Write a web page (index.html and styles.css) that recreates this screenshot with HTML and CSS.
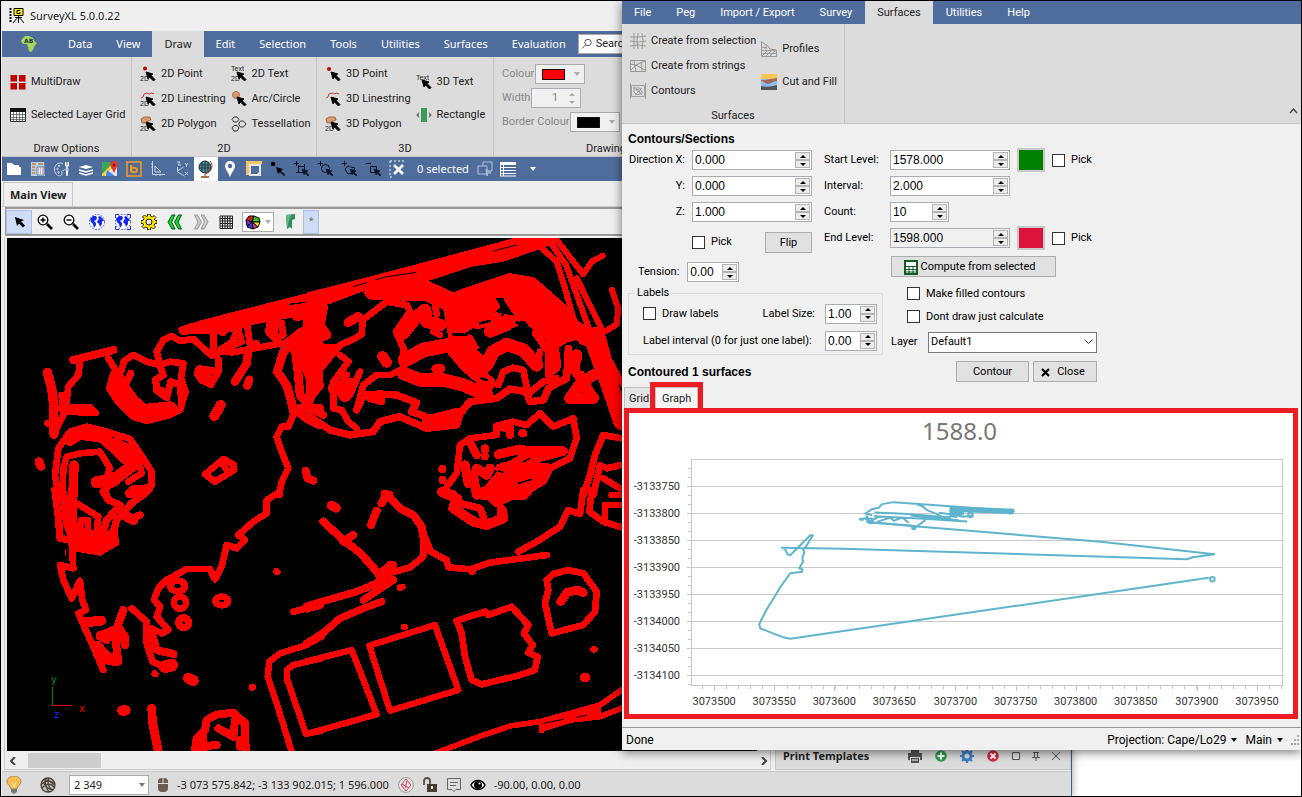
FILE: index.html
```html
<!DOCTYPE html>
<html lang="en">
<head>
<meta charset="utf-8">
<title>SurveyXL 5.0.0.22</title>
<link rel="stylesheet" href="styles.css">
</head>
<body>
<svg class="defs" aria-hidden="true">
  <symbol id="arrow" viewBox="0 0 16 16"><path d="M6 6l7 2-2 1.500 4 4-1.500 1.500-4-4L8 13z" fill="#000" stroke="#000"/></symbol>
  <symbol id="cur" viewBox="0 0 16 16"><path d="M8 8l6 2-2 1 3 3-1 1-3-3-1 2z" fill="#0b1420" stroke="#0b1420" stroke-width=".6"/></symbol>
  <symbol id="squig" viewBox="0 0 16 16"><path d="M1 7l2-1 1-3 3-1 2 1 3-1 2 1" fill="none" stroke="#c23b3b"/></symbol>
  <symbol id="poly" viewBox="0 0 16 16"><path d="M1 3l3-2h6l1 3-3 1-2 2H2z" fill="#d99a6c" stroke="#8a5a3a" stroke-width=".8"/></symbol>
  <symbol id="globe" viewBox="0 0 16 16"><circle cx="8" cy="8" r="7.500" fill="#fff" stroke="#2438e8" stroke-dasharray="1.500 1.500"/><path d="M1 5l3-3 3 0 1 2-1 2-2 1 2 2 0 2-2 3-1-4-2-2zM9 3l2-1 3 3 1 2-2 0 0 3-2 3-1-3-2-2 1-2 1-1z" fill="#1428f0"/></symbol>
</svg>

<main class="desktop">
<section class="app" aria-label="SurveyXL">
  <header class="titlebar">
    <svg width="16" height="16" viewBox="0 0 16 16"><path d="M1.500 0v14" stroke="#000" stroke-width="2" stroke-dasharray="2 1"/><path d="M5 .5h9v7H5z" fill="#ffe920" stroke="#000"/><path d="M11 2.500H8v3h3V4" fill="none" stroke="#000"/><path d="M9.500 8v7M9 9l-5 6M10 9l5 6M6 9.500h7" stroke="#000"/></svg>
    <span>SurveyXL 5.0.0.22</span>
  </header>
  <nav class="tabs">
    <button class="logo" aria-label="Menu"><svg width="18" height="18" viewBox="0 0 18 18"><path d="M2 4l3-3 4 0 4 2 2 4 2 1-3 4-1 3-2 2-2-1-1-4-1-3-4 0-2-3z" fill="#a8d65c"/><text x="4" y="8" class="ab">AB</text></svg></button>
    <button>Data</button><button>View</button><button class="on">Draw</button><button>Edit</button><button>Selection</button><button>Tools</button><button>Utilities</button><button>Surfaces</button><button>Evaluation</button>
    <label class="search"><svg width="12" height="12" viewBox="0 0 12 12"><circle cx="7" cy="4.500" r="3.200" fill="none" stroke="#555"/><path d="M4.500 7L1 10.500" stroke="#555"/></svg><input type="text" value="Search" aria-label="Search"></label>
  </nav>
  <div class="ribbon">
    <section class="group g-options">
      <div class="cols"><div class="col two">
        <button><svg width="16" height="16" viewBox="0 0 16 16"><path d="M.5 1h6.500v6.500H.5zM9 1h6.500v6.500H9zM.5 9h6.500v6.500H.5zM9 9h6.500v6.500H9z" fill="#c40000"/></svg>MultiDraw</button>
        <button><svg width="16" height="16" viewBox="0 0 16 16"><path d="M.5 1.500h15v13H.5z" fill="#fff" stroke="#222"/><path d="M0 1h16v4H0z" fill="#111"/><path d="M3.500 5v10M6.500 5v10M9.500 5v10M12.500 5v10M0 7.500h16M0 10.500h16M0 12.500h16" stroke="#444" stroke-width=".7"/></svg>Selected Layer Grid</button>
      </div></div>
      <h2>Draw Options</h2>
    </section>
    <section class="group g-2d">
      <div class="cols">
        <div class="col">
          <button><svg width="16" height="16" viewBox="0 0 16 16"><circle cx="5" cy="2.500" r="2" fill="#c40000"/><use href="#arrow"/><text x="0" y="15" class="tiny">2D</text></svg>2D Point</button>
          <button><svg width="16" height="16" viewBox="0 0 16 16"><use href="#squig"/><use href="#arrow"/><text x="0" y="15" class="tiny">2D</text></svg>2D Linestring</button>
          <button><svg width="16" height="16" viewBox="0 0 16 16"><use href="#poly"/><use href="#arrow"/><text x="0" y="15" class="tiny">2D</text></svg>2D Polygon</button>
        </div>
        <div class="col">
          <button><svg width="16" height="16" viewBox="0 0 16 16"><text x="0" y="5" class="tiny">Text</text><use href="#arrow"/><text x="0" y="15" class="tiny">2D</text></svg>2D Text</button>
          <button><svg width="16" height="16" viewBox="0 0 16 16"><circle cx="5" cy="4" r="3.500" fill="#d99a6c" stroke="#a8744e"/><use href="#arrow"/></svg>Arc/Circle</button>
          <button><svg width="16" height="16" viewBox="0 0 16 16" fill="none" stroke="#333"><path d="M3 1h3l2 2.500L6 6H3L1 3.500zM3 9.500h3l2 2.500-2 3H3l-2-3zM9.500 5h3l2.500 3-2.500 3h-3L7.500 8z"/></svg>Tessellation</button>
        </div>
      </div>
      <h2>2D</h2>
    </section>
    <section class="group g-3d">
      <div class="cols">
        <div class="col">
          <button><svg width="16" height="16" viewBox="0 0 16 16"><circle cx="4" cy="3" r="2" fill="#c40000"/><use href="#arrow"/></svg>3D Point</button>
          <button><svg width="16" height="16" viewBox="0 0 16 16"><use href="#squig"/><use href="#arrow"/></svg>3D Linestring</button>
          <button><svg width="16" height="16" viewBox="0 0 16 16"><use href="#poly"/><use href="#arrow"/><text x="0" y="15" class="tiny">2D</text></svg>3D Polygon</button>
        </div>
        <div class="col two">
          <button><svg width="16" height="16" viewBox="0 0 16 16"><text x="0" y="6" class="tiny">Text</text><use href="#arrow"/></svg>3D Text</button>
          <button><svg width="16" height="16" viewBox="0 0 16 16"><path d="M5 1h6v14H5z" fill="#3a9c55"/><path d="M3 5v6L0 8zM13 5v6l3-3z" fill="#777"/></svg>Rectangle</button>
        </div>
      </div>
      <h2>3D</h2>
    </section>
    <section class="group g-drawing">
      <div class="cols"><div class="col dim">
        <div class="field">Colour<button class="swatchbox" aria-label="Colour"><i class="chip red"></i><i class="caret"></i></button></div>
        <div class="field"><label for="w">Width</label><span class="num flat"><input id="w" type="text" value="1"><span class="spin"><button class="up" aria-label="Increase"></button><button class="down" aria-label="Decrease"></button></span></span></div>
        <div class="field">Border Colour<button class="swatchbox" aria-label="Border colour"><i class="chip black"></i><i class="caret"></i></button></div>
      </div></div>
      <h2>Drawing</h2>
    </section>
  </div>
  <div class="quickbar">
    <button aria-label="Open"><svg width="16" height="16" viewBox="0 0 16 16"><path d="M1 2h5l2 2h5v2h2v8H1z" fill="#fff"/></svg></button>
    <button aria-label="Report"><svg width="16" height="16" viewBox="0 0 16 16"><path d="M1 1h13l1 14H1z" fill="#b9d3ee"/><path d="M2 3h4M8 3h5M2 6h3M2 9h3M2 12h3" stroke="#c77f3c" stroke-width="1.500"/><path d="M7 6h7v8H7z" fill="#fff" stroke="#56749c"/><path d="M8 8h5M8 10h5M8 12h5" stroke="#b05050" stroke-dasharray="1 1"/></svg></button>
    <button aria-label="Palette"><svg width="16" height="16" viewBox="0 0 16 16" fill="none" stroke="#c9d5e6"><path d="M9 3C5 0 0 4 .500 9c.5 5 5 7 7 5 1.500-1.500-.5-3 .5-4s2 0 2.500-1.500"/><circle cx="5" cy="5" r=".8"/><circle cx="3.500" cy="8" r=".8"/><circle cx="4.500" cy="11.500" r=".8"/><path d="M13 1v5l-1 2 1 7 1-7-1-2M11.500 1v4h3V1" stroke="#fff"/></svg></button>
    <button aria-label="Layers"><svg width="16" height="16" viewBox="0 0 16 16" fill="none" stroke="#fff" stroke-width="1.400"><path d="M1 12l7 2 7-2M1 9l7 2 7-2"/><path d="M1 6l7-2 7 2-7 2z" fill="#fff" stroke="none"/></svg></button>
    <button aria-label="Map"><svg width="16" height="16" viewBox="0 0 16 16"><path d="M0 1h15v14H0z" fill="#3aa757"/><path d="M0 15L15 3v12z" fill="#e8e8e8"/><path d="M0 13L12 1h3L3 15H0z" fill="#f8cf3c"/><path d="M5 9l8 6H4z" fill="#4285f4"/><path d="M12 12L8 4a4 4 0 1 1 8 0z" fill="#e33b2e"/><circle cx="12" cy="4" r="1.500" fill="#7d1712"/></svg></button>
    <button aria-label="Imagery"><svg width="16" height="16" viewBox="0 0 16 16" fill="none" stroke="#f39a1e" stroke-width="1.500"><path d="M1 1h14v14H1z"/><path d="M5 4v7" stroke-width="2"/><ellipse cx="8" cy="9" rx="3" ry="2.200" stroke-width="2"/></svg></button>
    <button aria-label="Angle"><svg width="16" height="16" viewBox="0 0 16 16" fill="none" stroke="#c7d3e5"><path d="M2.500 0v13.500H15M5 5l6 6H5z"/><path d="M1 3h2M1 6h2M6 13v2M10 13v2"/></svg></button>
    <button aria-label="Axes"><svg width="16" height="16" viewBox="0 0 16 16" fill="none" stroke="#c2cfe2"><path d="M3 1h3L4 4h3M3.500 6v5l7 4M3.500 10l6-4M11 2l1.500 2L14 2M12.500 4v2M11 11l3 3M14 11l-3 3"/></svg></button>
    <button class="on" aria-label="Globe"><svg width="18" height="18" viewBox="0 0 18 18"><circle cx="8" cy="7" r="6" fill="#4c8f98" stroke="#253038"/><path d="M3 5h10M2 8h12M8 1v12M5 2v10M11 2v10" stroke="#19262c" stroke-width=".8"/><path d="M13 1c4 4 2 11-5 13v2" fill="none" stroke="#a43f2b"/><path d="M4 16h8v2H4z" fill="#a9744a"/></svg></button>
    <button aria-label="Pin"><svg width="16" height="16" viewBox="0 0 16 16"><path d="M8 16C6 11 3 8 3 5a5 5 0 0 1 10 0c0 3-3 6-5 11z" fill="#fff"/><circle cx="8" cy="5" r="2.200" fill="#4f6d9c"/></svg></button>
    <button aria-label="Sheet"><svg width="16" height="16" viewBox="0 0 16 16"><path d="M3 3h12v12H3z" fill="#e6e6e6"/><path d="M0 0h16v3H0zM0 0h3v14H0z" fill="#f3c56b"/><path d="M5 5h8v6l-2 2H5z" fill="#4f6d9c"/></svg></button>
    <button aria-label="Pick point"><svg width="16" height="16" viewBox="0 0 16 16"><circle cx="3" cy="3" r="2.300"/><path d="M6 6l7 2-2 2 4 4-1 1-4-4-2 2z"/></svg></button>
    <button aria-label="Add rectangle"><svg width="16" height="16" viewBox="0 0 16 16" fill="none" stroke="#0b1420"><path d="M0 2.500h5M2.500 0v5M4 5.500h6.500v6H4.500V4M10.500 5V3M4 11.500h-2"/><use href="#cur"/></svg></button>
    <button aria-label="Add circle"><svg width="16" height="16" viewBox="0 0 16 16" fill="none" stroke="#0b1420"><path d="M0 2.500h5M2.500 0v5"/><circle cx="7.500" cy="7.500" r="4"/><use href="#cur"/></svg></button>
    <button aria-label="Add polygon"><svg width="16" height="16" viewBox="0 0 16 16" fill="none" stroke="#0b1420"><path d="M0 2.500h5M2.500 0v5M3 8l3-3 3 1 4 1-3 5-4 1z"/><use href="#cur"/></svg></button>
    <button aria-label="Remove"><svg width="16" height="16" viewBox="0 0 16 16" fill="none" stroke="#0b1420"><path d="M0 2.500h5M4.500 5.500h6v6h-6z"/><use href="#cur"/></svg></button>
    <button aria-label="Clear"><svg width="18" height="18" viewBox="0 0 18 18"><path d="M1 1h16M1 1v16M1 17h2" stroke="#fff" stroke-dasharray="2 2" fill="none"/><path d="M5 5l9 9M14 5l-9 9" stroke="#fff" stroke-width="2.600"/></svg></button>
    <span class="count">0 selected</span>
    <button aria-label="Copy"><svg width="16" height="16" viewBox="0 0 16 16" fill="none" stroke="#b4c3da"><path d="M6 1h9v9h-5M6 5V1M1 5h9v8H1z"/><path d="M9 8l5 4-3 0-1 3z"/></svg></button>
    <button aria-label="List"><svg width="17" height="16" viewBox="0 0 17 16"><path d="M0 1h16v3H0z" fill="#fff"/><path d="M.5 4v11M3.500 4v11M0 6.500h16M0 9.500h16M0 12.500h16M0 15h16" stroke="#fff"/></svg></button>
    <button aria-label="More"><i class="caret white"></i></button>
  </div>
  <div class="doctabs"><button>Main View</button></div>
  <div class="viewbar">
    <button class="on" aria-label="Select"><svg width="16" height="16" viewBox="0 0 16 16"><path d="M4 3l9 3-3 1.500 4 4-2 2-4-4L6 12z"/></svg></button>
    <button aria-label="Zoom in"><svg width="16" height="16" viewBox="0 0 16 16" fill="none" stroke="#000"><circle cx="6" cy="6" r="4.800" fill="#fff" stroke-width="1.300"/><path d="M10 10l5 5" stroke-width="2.600"/><path d="M3.500 6h5M6 3.500v5" stroke-width="1.400"/></svg></button>
    <button aria-label="Zoom out"><svg width="16" height="16" viewBox="0 0 16 16" fill="none" stroke="#000"><circle cx="6" cy="6" r="4.800" fill="#fff" stroke-width="1.300"/><path d="M10 10l5 5" stroke-width="2.600"/><path d="M3.500 6h5" stroke-width="1.400"/></svg></button>
    <button aria-label="World"><svg width="16" height="16"><use href="#globe"/></svg></button>
    <button aria-label="World extents"><svg width="16" height="16" viewBox="0 0 16 16"><use href="#globe"/><path d="M.5 4V.5H4M12 .5h3.500V4M15.500 12v3.500H12M4 15.500H.5V12" fill="none" stroke="#2438e8"/></svg></button>
    <button aria-label="Settings"><svg width="16" height="16" viewBox="0 0 16 16"><path d="M6.500 0h3v2l2 1 1.500-1.500 2 2L13.500 5l.5 1.500h2v3h-2l-1 2 1.500 1.500-2 2L11 13.500l-1.500.5v2h-3v-2l-2-1L3 14.500l-2-2L2.500 11 2 9.500H0v-3h2l1-2L1.500 3l2-2L5 2.500 6.500 2z" fill="#ffe600" stroke="#222"/><circle cx="8" cy="8" r="3" fill="#eee" stroke="#222"/></svg></button>
    <button aria-label="Back"><svg width="16" height="16" viewBox="0 0 16 16" fill="#0fe02c" stroke="#064d10"><path d="M5 1h3L4.500 8 8 15H5L1 8zM11.500 1h3L11 8l3.500 7h-3l-4-7z"/></svg></button>
    <button aria-label="Forward"><svg width="16" height="16" viewBox="0 0 16 16" fill="#ccc" stroke="#999"><path d="M1.500 1h3l4 7-4 7h-3L5 8zM8 1h3l4 7-4 7H8l3.500-7z"/></svg></button>
    <button aria-label="Grid"><svg width="16" height="16" viewBox="0 0 16 16"><path d="M2 2h12.500v12.500H2zM4.500 2v12M7 2v12M9.500 2v12M12 2v12M2 4.500h12M2 7h12M2 9.500h12M2 12h12" fill="none" stroke="#222"/></svg></button>
    <button class="combo" aria-label="View colours"><svg width="16" height="16" viewBox="0 0 16 16" stroke="#000"><path d="M7 8L1 6l3-4 5 0z" fill="#d81f1f"/><path d="M7 8L9 2l5 2 1 4z" fill="#2fc42f"/><path d="M7 8l8 0-2 5z" fill="#ffe600"/><path d="M7 8l6 5-5 2z" fill="#e7369e"/><path d="M7 8l1 7-6-2z" fill="#2b48e0"/><path d="M7 8l-6-2 1 6z" fill="#8a2be2"/></svg><i class="caret"></i></button>
    <button aria-label="Run"><svg width="16" height="16" viewBox="0 0 16 16"><path d="M4 1l9-1v5l-3 1 0 9-2-2-3 2z" fill="#2f8f5b"/><path d="M4 1l5 0-4 13z" fill="#61b486"/></svg></button>
    <button class="star">*</button>
  </div>
  <div class="work">
    <div class="viewport">
      <svg class="map" viewBox="7 238 750 513" preserveAspectRatio="xMinYMin slice" role="img" aria-label="Survey drawing">
        <rect x="7" y="238" width="2000" height="2000" fill="#000"/>
        <g fill="none" stroke="#f00" stroke-linecap="round" stroke-linejoin="round" shape-rendering="crispEdges">
          <g transform="translate(0 235) scale(.33333)" stroke-width="20">
            <path d="M542 282L600 264 700 238 960 172V240L890 238 760 262 690 285 620 290 545 292Z" fill="#f00" stroke-width="14"/>
            <path d="M870 208L960 196" stroke="#000" stroke-width="4"/>
            <path d="M890 245L940 238M640 275L670 290" stroke-width="26"/>
            <path d="M480 390L470 350 490 315 515 303 540 318 580 312 605 335 635 362 660 350 700 352 735 345 860 322 900 290 960 262M640 290L640 340M690 345L700 310 715 285 725 320 700 330M660 345L690 325M740 260L750 330 770 325M812 240L805 290 825 310 850 300 845 265 825 265 825 290"/>
            <path d="M745 345L740 385 705 440M742 452L748 434" stroke-width="25"/>
            <path d="M655 375L655 410 632 448 605 435 592 415 610 403 640 408" stroke-width="22"/><path d="M600 405L620 425" stroke-width="30"/>
            <path d="M220 375L340 345" stroke-width="24"/>
            <path d="M240 385L235 420 205 455 200 500M325 370L350 410M160 600L190 540 185 480M142 565L160 570"/>
            <path d="M142 412L155 460 160 500 162 598" stroke-width="28"/>
            <path d="M180 520L268 516 288 534 200 530Z" fill="#f00"/>
            <path d="M365 405L372 378 400 360 440 380 480 390 510 380 550 385 543 430 557 470 540 525 510 540 440 558 400 545 350 495 328 460 340 415Z"/>
            <path d="M350 430L370 480 430 530 510 522" stroke-width="46"/>
            <path d="M392 415L375 450 400 485M480 390L490 420 465 435 475 470 500 488 512 440 540 450 545 500M470 465L505 470" stroke-width="21"/>
            <path d="M662 510L643 543" stroke-width="30"/>
            <path d="M615 718L645 740 703 705 700 688 670 672ZM670 690L685 712"/>
            <path d="M117 680L123 694" stroke-width="26"/>
            <path d="M175 780L165 720 175 640 210 590 260 575 320 590 390 612 430 670 455 710 455 750 430 775"/>
            <path d="M210 615L240 596 310 606 360 655 400 690 350 728 290 742" stroke-width="36"/>
            <path d="M188 780L190 700 200 665 240 655 300 650 330 700 320 730M320 780L315 760 350 740M385 740L425 715 410 650"/>
            <path d="M345 620L385 640 420 680" stroke-width="26"/>
            <path d="M222 690L220 780M400 765L445 762" stroke-width="28"/>
            <path d="M870 500L880 540 865 575 845 575 830 605 845 650 865 700 845 740 838 780"/>
            <path d="M917 707L922 730 940 737" stroke-width="24"/>
            <path d="M950 290L890 315 850 350 832 410 860 450 880 520 920 550 960 570M885 340L895 420 900 480 925 505 935 480 960 450M900 520L960 520" stroke-width="26"/>
            <path d="M900 320L960 250V440L935 450 915 400Z" fill="#f00"/>
          </g>
          <g transform="translate(310 235) scale(.33333)" stroke-width="20">
            <path d="M-6 178L160 136 350 86 610 16H740L690 36 580 74 480 90 360 130 180 155 60 200-6 212Z" fill="#f00" stroke-width="12"/>
            <path d="M130 155L230 125 320 112M550 48L620 30" stroke="#000" stroke-width="3"/>
            <path d="M190 165L350 168 430 205 480 185 600 145 660 155 740 225 780 290" stroke-width="60"/>
            <path d="M430 200L640 150 790 300 740 330 700 300 640 240 610 180 540 180 560 215 520 245 440 300Z" fill="#f00"/>
            <path d="M740 15L820 118 845 80 878 62M690 35L740 80 765 160 790 250 815 320M720 20L768 90 790 150 840 290M800 130L880 292 920 268 925 220 906 165M850 290L940 450" stroke-width="18"/>
            <path d="M780 270L850 320 890 430 935 560M860 300L915 500" stroke-width="50"/>
            <path d="M-6 220L40 215 30 270 50 300-6 320Z" fill="#f00" stroke-width="28"/>
            <path d="M-6 330L90 335 20 420-6 490Z" fill="#f00" stroke-width="14"/>
            <path d="M115 262L145 245" stroke-width="28"/>
            <path d="M90 330L125 315 155 298 158 255 230 200 290 210 300 230 258 290 280 340 280 400 240 420 200 420 160 450 140 525M90 360L115 380 70 440 70 520 95 525 115 560 140 580M150 410L120 480 90 450 110 420" stroke-width="20"/>
            <path d="M75 460L120 450 105 480" stroke-width="42"/>
            <path d="M218 365L230 382" stroke-width="32"/>
            <path d="M280 295L320 245 345 225 350 260 390 270" stroke-width="38"/>
            <path d="M375 210L380 238M370 290L390 300"/>
            <path d="M285 375L340 345 420 330 470 390 535 445" stroke-width="44"/>
            <path d="M280 415L330 435 400 435 460 450 530 480" stroke-width="40"/>
            <path d="M310 400L420 365 445 410Z" fill="#000" stroke="none"/>
            <path d="M378 402L392 400" stroke-width="28"/>
            <path d="M420 200L440 310 500 370M470 320L515 400" stroke-width="48"/>
            <path d="M500 265L560 250 610 260M540 290L590 270" stroke-width="36"/>
            <path d="M500 345L530 322 640 300 650 316 560 330 525 365Z" fill="#000" stroke="none"/>
            <path d="M510 265L540 258M578 240L590 215M620 262L650 282M430 298L470 300M515 430L530 435" stroke="#000" stroke-width="8"/>
            <path d="M600 190L635 240M660 210L720 290 735 390" stroke-width="38"/>
            <path d="M530 390L550 350 590 328 640 345 680 390" stroke-width="40"/>
            <path d="M565 450L580 410 610 398 640 405 655 480M665 268H672M675 295L715 350 715 420 740 400M690 350L680 400M650 480L700 440 740 430"/>
            <path d="M0 520L40 540M0 545L60 585 120 600 190 590 210 560 270 545 350 580 440 570 450 535 480 500 560 490 600 462 650 470 660 500 700 495 715 460 770 430 775 340" stroke-width="22"/>
            <path d="M140 525L160 480 210 478 260 480 320 503 305 530 360 550 440 530M210 475L215 500 180 490" stroke-width="22"/>
            <path d="M350 560L440 550" stroke-width="30"/>
            <path d="M780 490L815 440 850 490 790 490M800 360L795 400 820 440 850 420" stroke-width="34"/>
            <path d="M820 380L818 400" stroke="#000" stroke-width="16"/>
            <path d="M400 770L440 715 450 630 480 610 560 600 560 572 610 560 650 570 690 535 730 575 790 550 800 610 780 670 720 700 700 740 640 775"/>
            <path d="M480 620L500 660M560 575L600 580M637 595H640M600 600V590M525 640V645M525 662V664M397 702V703M398 735V736" stroke-width="24"/>
            <path d="M565 658L620 645 760 648 640 680 570 700M465 690L475 745M500 700L530 720 540 700" stroke-width="28"/>
            <path d="M520 780L590 700 640 670 680 665 660 695 715 700 640 780Z" fill="#f00" stroke-width="30"/>
            <path d="M625 745L665 733M565 708L580 712M640 680L660 670" stroke="#000" stroke-width="5"/>
            <path d="M395 770L430 780M490 720L500 780" stroke-width="28"/>
            <path d="M935 610L880 600 855 660 840 720 820 780M870 690L850 780M935 690L890 700 870 690M880 730L930 760M0 735L10 737M222 775L240 778" stroke-width="20"/>
          </g>
          <g transform="translate(0 490) scale(.33333)" stroke-width="20">
            <path d="M165 0L175 80 180 145 210 150M188 0L200 100 220 160M310 5L325 30 360 45 320 90 300 160M440 5L395 40 350 90 330 160M395 85L420 75" stroke-width="22"/>
            <path d="M218 0L215 100 250 130" stroke-width="30"/>
            <path d="M230 40L295 80 290 130M240 130L243 90 263 90 265 130"/>
            <path d="M215 125L330 130 345 110 350 160 300 190 230 178Z" fill="#f00" stroke-width="14"/>
            <path d="M390 10L430 10M380 80L400 90" stroke-width="30"/>
            <path d="M215 160L220 235 180 225 190 270 215 325 240 272 247 330 258 360 235 370 280 470 310 540"/>
            <path d="M196 180V196" stroke-width="4"/>
            <path d="M255 397L303 392" stroke-width="30"/>
            <path d="M370 360L352 410 375 440 375 465M300 435L355 420M345 440L355 515M300 440L320 450" stroke-width="24"/>
            <path d="M320 435L355 420 365 440M290 470L320 505 345 510" stroke-width="36"/>
            <path d="M395 355L440 395 440 460 458 515 500 535M455 415L485 430 505 420 470 380 480 350 462 330 475 295 500 270 560 237 630 237 645 268 665 230 680 165 710 175 735 150 715 135 760 95 800 70 800 30 840 5"/>
            <path d="M455 430L470 480 520 492" stroke-width="24"/><path d="M495 530L515 525" stroke-width="38"/>
            <ellipse cx="533" cy="288" rx="22" ry="16"/><circle cx="540" cy="338" r="18"/><circle cx="551" cy="398" r="15" stroke-width="22"/><ellipse cx="665" cy="333" rx="19" ry="13"/>
            <path d="M829 244L832 246M464 551L466 552M756 592L758 592M880 365L960 345"/>
            <path d="M368 662L376 661M565 564L580 572" stroke-width="32"/>
            <path d="M920 355L960 344" stroke-width="26"/>
            <path d="M965 440L920 465 840 490 808 515 803 560 830 640 875 785M965 505L880 525 860 540 862 570 918 732 965 722" stroke-width="19"/>
            <path d="M455 655L458 700 475 785" stroke-width="26"/>
            <path d="M585 780L590 745 615 720 620 690 650 674 700 668 735 700 737 780M610 735V780" stroke-width="24"/>
            <path d="M655 715L700 740 705 690M720 750V770M600 770L650 765" stroke-width="24"/>
          </g>
          <g transform="translate(310 490) scale(.33333)" stroke-width="20">
            <path d="M-10 348L140 305 200 280 250 225M-10 460L40 428 90 385 160 355 215 335M160 330L250 270 215 250" stroke-width="22"/>
            <path d="M40 95L100 150 150 188 205 250M100 155L130 135" stroke-width="24"/>
            <path d="M205 255L240 222 255 245 300 232 340 200 340 140M250 240L200 290"/>
            <path d="M345 170L335 110 310 75 270 55 230 12 215 40M200 62L183 105" stroke-width="24"/>
            <path d="M345 140L362 185 410 210 415 232 480 238 540 218 600 210 710 195M625 185L680 155 750 110 775 60 810 72 820 0M845 0L838 65 880 95 935 112M935 15L905 15M885 45L885 90M885 45L935 45"/>
            <path d="M64 46L78 54" stroke-width="28"/>
            <path d="M270 293L277 291M283 411H285M851 478H853M487 243V245"/>
            <path d="M823 562H827" stroke-width="28"/>
            <path d="M400 8L440 25 430 55 490 95 530 105 580 85 575 60" stroke-width="30"/>
            <path d="M500 5L650 0 600 20 560 40 540 20 510 15M510 100L560 95" stroke-width="24"/><path d="M450 40L510 55 520 80" stroke-width="22"/>
            <path d="M725 430L705 340 715 300 710 270 730 252 775 240 820 250 860 305 855 365 820 405Z"/>
            <path d="M752 335L770 308 800 300 820 308" stroke-width="26"/>
            <path d="M440 392L525 365 535 375 605 350 655 405 642 430 668 465 655 488 683 500 675 540 620 558 515 583 485 570 465 500 455 430Z"/>
            <path d="M178 467L375 405 445 600 240 662Z" stroke-width="19"/>
            <path d="M-10 514L125 480 145 530 200 673-10 732" stroke-width="19"/>
            <path d="M375 790L520 735 600 708 690 695 870 645 935 600M695 722L695 700 870 680 935 655" stroke-width="17"/>
            <path d="M700 710L780 685 860 660" stroke-width="28"/>
            <path d="M700 700L760 688M800 682L830 675" stroke="#000" stroke-width="3"/>
          </g>
        </g>
        <path d="M52.500 687v18.500" stroke="#080"/><path d="M52.500 705.500h19" stroke="#e00"/>
        <text x="51" y="683" fill="#080" class="axis">y</text><text x="79" y="712" fill="#e00" class="axis">x</text><text x="54" y="718" fill="#22f" class="axis">z</text>
      </svg>
      <div class="hscroll"><button aria-label="Scroll left"><svg width="8" height="8" viewBox="0 0 8 8"><path d="M6 0L2 4l4 4" fill="none" stroke="#444" stroke-width="2"/></svg></button><i></i><button class="end" aria-label="Scroll right"><svg width="8" height="8" viewBox="0 0 8 8"><path d="M2 0l4 4-4 4" fill="none" stroke="#444" stroke-width="2"/></svg></button></div>
    </div>
    <aside class="dock">
      <div class="dockbar"><h2>Print Templates</h2>
        <button aria-label="Print"><svg width="14" height="14" viewBox="0 0 14 14"><path d="M3 0h8v4H3zM0 4h14v7h-2V8H2v3H0zM3 9h8v5H3z" fill="#555"/><path d="M4 11h6" stroke="#fff"/></svg></button>
        <button aria-label="Add"><svg width="12" height="12" viewBox="0 0 12 12"><circle cx="6" cy="6" r="5.800" fill="#2e9a4d"/><path d="M6 2.500v7M2.500 6h7" stroke="#fff" stroke-width="2"/></svg></button>
        <button aria-label="Options"><svg width="14" height="14" viewBox="0 0 14 14"><circle cx="7" cy="7" r="4" fill="none" stroke="#3f7fc8" stroke-width="3"/><path d="M7 0v3M7 11v3M0 7h3M11 7h3M2 2l2 2M10 10l2 2M12 2l-2 2M4 10l-2 2" stroke="#3f7fc8" stroke-width="2"/></svg></button>
        <button aria-label="Delete"><svg width="12" height="12" viewBox="0 0 12 12"><circle cx="6" cy="6" r="5.800" fill="#cf2a3f"/><path d="M3.500 3.500l5 5M8.500 3.500l-5 5" stroke="#fff" stroke-width="2"/></svg></button>
        <button class="sm" aria-label="Maximise"><svg width="8" height="8" viewBox="0 0 8 8"><path d="M.5.5h7v7h-7z" fill="none" stroke="#555"/></svg></button>
        <button class="sm" aria-label="Pin"><svg width="8" height="9" viewBox="0 0 8 9"><path d="M1 .5h6M2.500 0v5M5.500 0v5M0 5.500h8M4 5v4" stroke="#555" fill="none"/></svg></button>
        <button class="sm" aria-label="Close"><svg width="8" height="8" viewBox="0 0 8 8"><path d="M0 0l8 8M8 0L0 8" stroke="#555"/></svg></button>
      </div>
    </aside>
  </div>
  <footer class="status">
    <svg width="16" height="18" viewBox="0 0 16 18"><path d="M5 13C5 10 1 9 1 5.500a7 5.500 0 0 1 14 0C15 9 11 10 11 13z" fill="#f8bd4c" stroke="#a88b62"/><path d="M6 6l2 5 2-5" fill="none" stroke="#fff3b0"/><path d="M5 13h6v3l-3 2-3-2z" fill="#777"/></svg>
    <svg width="16" height="16" viewBox="0 0 16 16" fill="none" stroke="#4c443e" stroke-width="1.300"><circle cx="8" cy="8" r="7" fill="#c4c0bc"/><path d="M1 8c4-5 10-5 14-1M2 11c4-5 9-5 12-1M4 3c4 0 8 2 10 5M3 5c3 5 7 8 10 8M5 2c0 5 1 9 4 13M9 1c-2 4-1 9 3 12"/></svg>
    <span class="pick"><select aria-label="Scale"><option>2 349</option></select><i class="caret"></i></span>
    <svg width="12" height="16" viewBox="0 0 12 16"><path d="M1 4a4 3.500 0 0 1 4-3h.5v5H1zM6.500 1H7a4 3.500 0 0 1 4 3v2H6.500zM1 7h10v4a4 4 0 0 1-4 4H5a4 4 0 0 1-4-4z" fill="#6b5b50"/></svg>
    <span class="coords">-3 073 575.842; -3 133 902.015; 1 596.000</span>
    <svg width="16" height="16" viewBox="0 0 16 16" fill="none"><circle cx="8" cy="8" r="7.400" fill="#e6e6e6" stroke="#999"/><path d="M8 2l5 6-5 6-5-6zM4 7l7 4M9 4l-2 7" stroke="#d33c50"/></svg>
    <svg width="16" height="16" viewBox="0 0 16 16"><path d="M2 8V4a3 3 0 0 1 6 0v4" fill="none" stroke="#5a4a40" stroke-width="1.800"/><path d="M5 7h10v8H5z" fill="#4b3b32"/><path d="M10 9v3" stroke="#fff" stroke-width="2"/></svg>
    <svg width="16" height="16" viewBox="0 0 16 16" fill="none" stroke="#666"><path d="M1.500 1.500h13v11H10l-2 2-2-2H1.500zM4 5.500h8M4 8.500h6"/></svg>
    <svg width="16" height="16" viewBox="0 0 16 16"><path d="M1 8c3-6 11-6 14 0-3 6-11 6-14 0z" fill="#fff" stroke="#000" stroke-width="1.500"/><circle cx="8" cy="8" r="4"/><circle cx="9.500" cy="6.500" r="1" fill="#fff"/></svg>
    <span>-90.00, 0.00, 0.00</span>
  </footer>
</section>

<section class="panel" aria-label="Contours">
  <nav class="tabs">
    <button>File</button><button>Peg</button><button>Import / Export</button><button>Survey</button><button class="on">Surfaces</button><button>Utilities</button><button>Help</button>
  </nav>
  <div class="ribbon">
    <section class="group g-surf">
      <div class="cols">
        <div class="col">
          <button><svg width="16" height="16" viewBox="0 0 16 16" fill="none" stroke="#999"><path d="M4 0v16M8 0l-1 8 1 8M12 0l1 8-1 8M0 4h8l8-1M0 8l8 1 8-1M0 13l8-1 8 1"/></svg>Create from selection</button>
          <button><svg width="16" height="16" viewBox="0 0 16 16" fill="none" stroke="#999"><path d="M.5 2.500h15v11H.5zM0 6l6 1 9-4M4 2l2 12M6 7l9 5M11 4l1 9M0 13l6-6"/></svg>Create from strings</button>
          <button><svg width="16" height="16" viewBox="0 0 16 16" fill="none" stroke="#999"><path d="M1.500 2.500h13v11h-13zM.5 0v16M15.500 0v16M4 5l6 0 2 5-5 2-3-3zM6 6l3 1 1 3M3 4l9 8M5 12l7-7" stroke-width=".9"/></svg>Contours</button>
        </div>
        <div class="col two">
          <button><svg width="16" height="16" viewBox="0 0 16 16" fill="none" stroke="#999"><path d="M.5 0v15.500h15V9L9 8 6 4 0 1M0 6l6 1M0 9.500h15M0 12.500h15M1 15l5-5M5 15l5-5M9 15l5-5M5 4v4"/></svg>Profiles</button>
          <button><svg width="16" height="16" viewBox="0 0 16 16"><path d="M0 0h16v16H0z" fill="#8fbdf2"/><path d="M0 0h16v5H0z" fill="#f8c651"/><path d="M0 6c4 0 6 0 9-1 3 0 5-1 7-1v3c-4 0-6 3-9 3S3 7 0 7z" fill="#a5685a"/><path d="M0 12c4 1 10 1 16-1v5H0z" fill="#555"/></svg>Cut and Fill</button>
        </div>
      </div>
      <h2>Surfaces</h2>
    </section>
    <svg class="collapse" width="9" height="6" viewBox="0 0 9 6"><path d="M1 5l3.500-4L8 5" fill="none" stroke="#444" stroke-width="1.400"/></svg>
  </div>
  <form class="form" onsubmit="return false">
    <h1>Contours/Sections</h1>
    <div class="formcols">
      <div class="left">
        <div class="row dir"><label for="dx">Direction X:</label><span class="num"><input id="dx" type="text" value="0.000"><span class="spin"><button class="up" aria-label="Increase"></button><button class="down" aria-label="Decrease"></button></span></span></div>
        <div class="row dir"><label for="dy">Y:</label><span class="num"><input id="dy" type="text" value="0.000"><span class="spin"><button class="up" aria-label="Increase"></button><button class="down" aria-label="Decrease"></button></span></span></div>
        <div class="row dir"><label for="dz">Z:</label><span class="num"><input id="dz" type="text" value="1.000"><span class="spin"><button class="up" aria-label="Increase"></button><button class="down" aria-label="Decrease"></button></span></span></div>
        <div class="row pickrow"><label class="check"><input type="checkbox">Pick</label><button class="btn">Flip</button></div>
        <div class="row tension"><label for="te">Tension:</label><span class="num small"><input id="te" type="text" value="0.00"><span class="spin"><button class="up" aria-label="Increase"></button><button class="down" aria-label="Decrease"></button></span></span></div>
        <fieldset><legend>Labels</legend>
          <div class="frow"><label class="check"><input type="checkbox">Draw labels</label><label for="ls" class="push">Label Size:</label><span class="num small"><input id="ls" type="text" value="1.00"><span class="spin"><button class="up" aria-label="Increase"></button><button class="down" aria-label="Decrease"></button></span></span></div>
          <div class="frow"><label for="li">Label interval (0 for just one label):</label><span class="num small push"><input id="li" type="text" value="0.00"><span class="spin"><button class="up" aria-label="Increase"></button><button class="down" aria-label="Decrease"></button></span></span></div>
        </fieldset>
      </div>
      <div class="right">
        <div class="row"><label for="sl">Start Level:</label><span class="num"><input id="sl" type="text" value="1578.000"><span class="spin"><button class="up" aria-label="Increase"></button><button class="down" aria-label="Decrease"></button></span></span><button class="swatch green" aria-label="Start colour"></button><label class="check"><input type="checkbox">Pick</label></div>
        <div class="row"><label for="iv">Interval:</label><span class="num"><input id="iv" type="text" value="2.000"><span class="spin"><button class="up" aria-label="Increase"></button><button class="down" aria-label="Decrease"></button></span></span></div>
        <div class="row"><label for="co">Count:</label><span class="num narrow"><input id="co" type="text" value="10"><span class="spin"><button class="up" aria-label="Increase"></button><button class="down" aria-label="Decrease"></button></span></span></div>
        <div class="row"><label for="el">End Level:</label><span class="num off"><input id="el" type="text" value="1598.000" readonly><span class="spin"><button class="up" aria-label="Increase"></button><button class="down" aria-label="Decrease"></button></span></span><button class="swatch crimson" aria-label="End colour"></button><label class="check"><input type="checkbox">Pick</label></div>
        <div class="row compute"><button class="btn"><svg width="14" height="15" viewBox="0 0 14 15"><path d="M1 1h12v13H1z" fill="#fff" stroke="#145a28" stroke-width="2"/><path d="M3 3h8v2H3z" fill="#fff"/><path d="M5 6v8M9 6v8M1 6.500h12M1 9.500h12M1 12h12" stroke="#145a28"/></svg>Compute from selected</button></div>
        <div class="opt"><label class="check"><input type="checkbox">Make filled contours</label></div>
        <div class="opt"><label class="check"><input type="checkbox">Dont draw just calculate</label></div>
        <div class="row layer"><label for="ly">Layer</label><span class="pick"><select id="ly"><option>Default1</option></select><svg width="9" height="6" viewBox="0 0 9 6"><path d="M.5.5l4 4 4-4" fill="none" stroke="#333"/></svg></span></div>
      </div>
    </div>
    <div class="formfoot"><output>Contoured 1 surfaces</output><button class="btn contour">Contour</button><button class="btn close"><svg width="9" height="9" viewBox="0 0 9 9"><path d="M1 1l7 7M8 1L1 8" stroke="#000" stroke-width="2.200"/></svg>Close</button></div>
  </form>
  <div class="restabs"><button>Grid</button><div class="mark"><button class="on">Graph</button></div></div>
  <div class="chartbox">
    <svg class="chart" viewBox="629 413 663 301" role="img" aria-label="Section graph 1588.0">
      <text x="959" y="440" class="ctitle" text-anchor="middle">1588.0</text>
      <g fill="none" stroke="#c8c8c8" shape-rendering="crispEdges">
        <path d="M691.500 459.500h590v226h-590z"/>
        <path d="M687 486.500h594M687 513.500h594M687 540.500h594M687 567.500h594M687 594.500h594M687 621.500h594M687 648.500h594M687 675.500h594"/>
        <path d="M689.500 468v217" stroke-width="3" stroke-dasharray="1 8"/>
        <path d="M702 687.500h579" stroke-width="3" stroke-dasharray="1 11.040"/>
        <path d="M714.500 685v6M774.500 685v6M834.500 685v6M894.500 685v6M955.500 685v6M1015.500 685v6M1075.500 685v6M1135.500 685v6M1196.500 685v6M1256.500 685v6"/>
      </g>
      <g class="clabel" text-anchor="end">
        <text x="680" y="490">-3133750</text><text x="680" y="517">-3133800</text><text x="680" y="544">-3133850</text><text x="680" y="571">-3133900</text><text x="680" y="598">-3133950</text><text x="680" y="625">-3134000</text><text x="680" y="652">-3134050</text><text x="680" y="679">-3134100</text>
      </g>
      <g class="clabel" text-anchor="middle">
        <text x="714" y="705">3073500</text><text x="774" y="705">3073550</text><text x="834" y="705">3073600</text><text x="894" y="705">3073650</text><text x="955" y="705">3073700</text><text x="1015" y="705">3073750</text><text x="1075" y="705">3073800</text><text x="1135" y="705">3073850</text><text x="1196" y="705">3073900</text><text x="1256" y="705">3073950</text>
      </g>
      <g fill="none" stroke="#5fb4cd" stroke-width="2" stroke-linejoin="round">
        <path d="M1208 577.500L790 638.500 783 637 760 628 759 624 766 610 774 597 780 587 790 573 802 571.500 802 569 799 568 803 561 802 558 804 552 803 549 806 546 812.500 535 810 535 798 547 790 555 787 554 785 549 781.500 547.500 843 548.500 1186 559 1192 557 1213.500 554 1100 541.500 914 526 866 521.500"/>
        <circle cx="1211.500" cy="579" r="2.300"/>
        <g transform="translate(750 490) scale(.33333)" stroke-width="6">
          <path d="M325 88L345 84 365 98 480 106 490 115 525 90M345 84L355 95 385 80 373 78 520 86 650 94M365 75L345 70 365 57 385 53 395 42 430 36 600 48 790 63 775 72M500 43L515 48 530 60 560 72 575 80M373 67L460 71 600 82M380 95L420 82 430 92 455 82 475 98M480 76L625 90M565 68L600 72 640 80 665 76 665 70M530 82L600 80"/>
          <path d="M597 56L790 64" stroke-width="17"/><path d="M597 68L640 70M597 76L620 78" stroke-width="11"/><path d="M350 76L350 90M330 88H340M520 84L600 86" stroke-width="8"/><circle cx="660" cy="74" r="7"/><circle cx="360" cy="92" r="7"/><circle cx="490" cy="112" r="5"/>
        </g>
      </g>
    </svg>
  </div>
  <footer class="pstatus"><span>Done</span><button>Projection: Cape/Lo29<i class="caret dark"></i></button><button>Main<i class="caret dark"></i></button><svg width="8" height="10" viewBox="0 0 8 10" fill="#aaa"><path d="M6 0h2v2H6zM3 4h2v2H3zM6 4h2v2H6zM0 8h2v2H0zM3 8h2v2H3zM6 8h2v2H6z"/></svg></footer>
</section>
</main>
</body>
</html>
```
FILE: styles.css
```css
* { box-sizing: border-box; }
body { margin: 0; font: 11px/14px Roboto, Tahoma, sans-serif; color: #222; background: #fff; }
button, input, select { font: inherit; color: inherit; margin: 0; padding: 0; border: 0; border-radius: 0; background: none; }
svg { flex: none; display: block; }
h1, h2 { margin: 0; font-size: inherit; font-weight: normal; }
.defs { position: absolute; width: 0; height: 0; }
.desktop { position: relative; height: 100vh; border: 1px solid #000; overflow: hidden; }

/* windows */
.app { display: flex; flex-direction: column; width: 1071px; height: 100%; padding-left: 1px; background: #efefef; border-right: 1px solid #3d5c94; box-shadow: 0 0 8px #999; }
.panel { position: absolute; left: 621px; right: 0; top: 0; display: flex; flex-direction: column; background: #f0f0f0; box-shadow: 0 2px 10px rgba(0, 0, 0, .55); }

.titlebar { display: flex; align-items: center; gap: 5px; height: 30px; padding-left: 7px; font-family: "Noto Sans", sans-serif; }
.tabs { display: flex; align-items: stretch; height: 26px; background: #4f6d9c; color: #fff; }
.tabs > button { padding: 0 12px; white-space: nowrap; }
.app .tabs { font-family: "Noto Sans", sans-serif; }
.tabs > .logo { width: 54px; padding: 0 18px; }
.tabs > .on { background: #dcdcdc; color: #222; }
.panel .tabs { height: 23px; gap: 1px; }
.ab { font: bold 6px "DejaVu Sans", sans-serif; fill: #234; }
.search { display: flex; align-items: center; gap: 3px; flex: 1; margin: 3px 0; padding-left: 2px; border: 1px solid #aaa; background: #fff; color: #222; }
.search input { flex: 1; min-width: 0; font-family: Roboto, sans-serif; }

.ribbon { display: flex; height: 100px; background: #dcdcdc; border-bottom: 1px solid #c6c6c6; }
.group { display: flex; flex-direction: column; border-right: 1px solid #c4c4c4; white-space: nowrap; }
.group h2 { text-align: center; line-height: 14px; }
.cols { display: flex; flex: 1; gap: 5px; padding: 4px 8px 0; }
.col { display: flex; flex-direction: column; }
.col > button { display: flex; align-items: center; gap: 5px; height: 25px; text-align: left; }
.col.two { padding-top: 4px; }
.col.two > button { height: 33px; }
.g-options { width: 130px; }
.g-2d { width: 185px; }
.g-3d { width: 177px; }
.g-drawing { flex: 1; }
.group.g-drawing h2 { text-align: left; padding-left: 92px; }
.g-surf { width: 223px; }
.panel .ribbon { position: relative; }
.collapse { margin: auto 3px 9px auto; }
.tiny { font: 7px "Liberation Sans", sans-serif; fill: #222; }
.dim { color: #888; padding-top: 1px; }
.field { display: flex; align-items: center; gap: 1px; height: 24px; }
.swatchbox { display: flex; align-items: center; justify-content: space-between; width: 50px; height: 20px; padding: 0 4px 0 6px; border: 1px solid #aaa; background: #f0f0f0; }
.chip { width: 23px; height: 11px; border: 1px solid #111; }
.red { background: #f00; }
.black { background: #000; }
.caret { width: 0; height: 0; border: 3px solid transparent; border-top: 4px solid #aaa; border-bottom: 0; }
.caret.white { border-top-color: #fff; }
.caret.dark { border-top-color: #111; }

.quickbar { display: flex; align-items: center; height: 24px; background: #4f6d9c; color: #fff; }
.quickbar button { display: flex; align-items: center; justify-content: center; width: 24px; height: 24px; }
.quickbar .on { background: #fff; }
.count { padding: 0 4px 0 7px; font-family: "Noto Sans", sans-serif; }
.doctabs { display: flex; align-items: flex-end; height: 26px; padding-left: 1px; border-bottom: 1px solid #ccc; }
.doctabs button { height: 24px; padding: 0 6px; border: 1px solid #c6c6c6; border-bottom: 0; font-family: "Noto Sans", sans-serif; font-weight: bold; }
.viewbar { display: flex; align-items: center; height: 29px; margin-left: 3px; border: 1px solid #999; border-width: 2px 0 2px 1px; }
.viewbar button { display: flex; align-items: center; justify-content: center; width: 26px; height: 24px; }
.viewbar .on, .viewbar .star { background: #cfdcf5; border: 1px solid #aebfe0; }
.viewbar button:nth-child(9) { width: 24px; }
.viewbar .combo { width: 32px; height: 20px; margin: 0 3px 0 4px; gap: 4px; border: 1px solid #aaa; background: #fff; }
.viewbar .star { width: 16px; color: #777; }

.work { display: flex; flex: 1; min-height: 0; }
.viewport { display: flex; flex-direction: column; width: 767px; margin-left: 2px; border: 1px solid #ccc; border-top-color: #fff; }
.map { flex: 1; min-height: 0; width: 750px; margin: 1px 0 1px 2px; }
.axis { font: 10px "DejaVu Sans", sans-serif; }
.hscroll { display: flex; align-items: center; height: 17px; }
.hscroll button { display: flex; justify-content: center; width: 16px; margin-right: 7px; }
.hscroll i { width: 73px; height: 15px; background: #cdcdcd; }
.hscroll .end { margin: 0 0 0 auto; width: 12px; }
.dock { display: flex; flex-direction: column; justify-content: flex-end; flex: 1; margin-left: 4px; }
.dockbar { display: flex; align-items: center; height: 28px; padding: 0 4px 0 7px; border: 1px solid #c6c6c6; background: #dcdcdc; }
.dockbar h2 { flex: 1; font: bold 11px/14px "Noto Sans", sans-serif; }
.dockbar button { display: flex; justify-content: center; width: 26px; }
.dockbar .sm { width: 20px; }
.status { display: flex; align-items: center; gap: 8px; height: 25px; padding: 1px 4px 0; margin-top: 1px; border-top: 1px solid #c6c6c6; background: #dcdcdc; font-family: "Noto Sans", sans-serif; white-space: nowrap; }
.status > svg:nth-child(2) { margin: 0 5px 0 10px; }
.pick { position: relative; display: flex; align-items: center; }
.pick select { appearance: none; padding-left: 4px; background: #fff; }
.pick .caret, .pick svg { position: absolute; right: 4px; pointer-events: none; }
.pick .caret { border-top-color: #777; }
.status select { width: 80px; height: 20px; border: 1px solid #aaa; }
.status .coords { margin-right: 1px; }

/* contour form */
.form { display: flex; flex-direction: column; padding: 7px 4px 0 6px; color: #000; }
.form h1 { font: bold 12px/16px "Liberation Sans", Arial, sans-serif; }
.formcols { display: grid; grid-template-columns: 196px 59px 1fr; align-items: start; }
.left { grid-area: 1 / 1 / 2 / 3; }
.right { grid-area: 1 / 2 / 2 / 4; }
.row { display: flex; align-items: center; height: 26px; white-space: nowrap; }
.dir > label { width: 57px; margin-right: 7px; text-align: right; }
.dir > .num { width: 120px; }
.num { display: flex; height: 20px; padding: 1px; border: 1px solid #abadb3; background: #fff; }
.num input { flex: 1; min-width: 0; width: 0; padding-left: 1px; font: 12px/14px "Liberation Sans", Arial, sans-serif; }
.off { background: #f0f0f0; }
.spin { display: flex; flex-direction: column; width: 15px; background: #f0f0f0; }
.spin button { display: flex; flex: 1; align-items: center; justify-content: center; border: 1px solid #b4b4b4; background: #ececec; }
.spin button::after { content: ""; border: 3px solid transparent; border-top: 0; border-bottom: 3px solid #000; }
.spin .down::after { border-bottom: 0; border-top: 3px solid #000; }
.flat { width: 50px; background: #f0f0f0; }
.num.flat input { text-align: right; padding-right: 6px; font: inherit; }
.flat .spin, .flat .spin button { border: 0; background: none; }
.flat .spin button::after { border-bottom-color: #aaa; border-top-color: #aaa; }
.small { width: 52px; }
.check { display: flex; align-items: center; gap: 6px; white-space: nowrap; }
.check input { appearance: none; width: 13px; height: 13px; border: 1px solid #333; background: #fff; }
.pickrow { height: 34px; padding-left: 64px; gap: 33px; }
.btn { display: flex; align-items: center; justify-content: center; gap: 3px; height: 21px; padding-top: 1px; border: 1px solid #adadad; background: #e1e1e1; }
.pickrow .btn { width: 47px; }
.tension { padding-left: 10px; gap: 8px; }
fieldset { margin: 1px 0 0; padding: 0 5px 3px 14px; height: 69px; border: 1px solid #dcdcdc; }
legend { margin-left: -9px; padding: 0 3px; line-height: 14px; }
.frow { display: flex; align-items: center; height: 27px; gap: 10px; white-space: nowrap; }
.push { margin-left: auto; }
.right .row > label:first-child { width: 66px; }
.right .num { width: 120px; }
.right .narrow { width: 59px; }
.swatch { width: 28px; height: 24px; margin: 0 7px; border: 2px solid #c8c8c8; }
.green { background: #008000; }
.crimson { background: #dc143c; }
.right .compute { height: 31px; padding-left: 67px; }
.compute .btn { width: 165px; padding-right: 8px; }
.opt { display: flex; align-items: center; height: 23px; padding-left: 83px; }
.right .layer { height: 28px; padding-left: 67px; }
.right .layer > label:first-child { width: 37px; }
.layer select { width: 169px; height: 21px; padding-left: 2px; border: 1px solid #7a7a7a; }
.formfoot { display: flex; align-items: center; height: 31px; gap: 4px; }
.formfoot output { width: 324px; font: bold 12px/14px "Liberation Sans", Arial, sans-serif; }
.contour { width: 73px; }
.close { width: 64px; gap: 7px; padding-right: 4px; }

.restabs { display: flex; align-items: flex-end; height: 26px; margin-top: -5px; padding-left: 2px; }
.restabs button { height: 21px; padding: 1px 4px 0; border: 1px solid #c0c0c0; border-bottom: 0; background: #e4e4e4; }
.restabs .mark { margin-left: -4px; border: 5px solid #ed1c24; border-bottom: 0; }
.restabs .mark .on { width: 43px; background: #f5f5f5; padding: 1px 3px 0; }
.chartbox { margin: 0 3px 0 2px; border: 5px solid #ed1c24; background: #fff; }
.chart { width: 100%; height: auto; }
.ctitle { font: 24px "Noto Sans", sans-serif; fill: #777; }
.clabel { font: 11px Roboto, sans-serif; fill: #333; }
.pstatus { display: flex; align-items: center; height: 23px; margin-top: 8px; padding: 1px 2px 0 4px; gap: 8px; border-top: 1px solid #999; font-size: 12px; color: #000; }
.pstatus span { flex: 1; }
.pstatus button { display: flex; align-items: center; gap: 5px; }
```
